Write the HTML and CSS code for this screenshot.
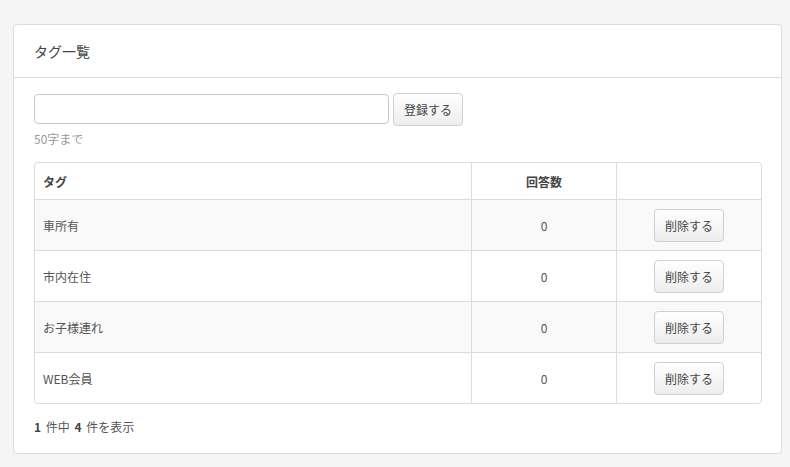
FILE: index.html
```html
<!DOCTYPE html>
<html lang="ja">
<head>
<meta charset="utf-8">
<title>タグ一覧</title>
<link rel="stylesheet" href="styles.css">
</head>
<body>
<div class="panel">
  <div class="panel-heading">タグ一覧</div>
  <div class="panel-body">
    <form class="tag-form">
      <input class="tag-input" type="text">
      <button class="btn btn-submit" type="button">登録する</button>
    </form>
    <p class="help">50字まで</p>
    <table class="tag-table">
      <thead>
        <tr><th class="col-tag">タグ</th><th class="col-count">回答数</th><th class="col-action"></th></tr>
      </thead>
      <tbody>
        <tr><td>車所有</td><td class="num">0</td><td class="act"><button class="btn" type="button">削除する</button></td></tr>
        <tr><td>市内在住</td><td class="num">0</td><td class="act"><button class="btn" type="button">削除する</button></td></tr>
        <tr><td>お子様連れ</td><td class="num">0</td><td class="act"><button class="btn" type="button">削除する</button></td></tr>
        <tr><td>WEB会員</td><td class="num">0</td><td class="act"><button class="btn" type="button">削除する</button></td></tr>
      </tbody>
    </table>
    <p class="summary"><b>1</b> 件中 <b>4</b> 件を表示</p>
  </div>
</div>
</body>
</html>
```
FILE: styles.css
```css
html, body {
  margin: 0;
  background: #f5f5f5;
}
body {
  padding: 24px 8px 0 13px;
  font-family: "Noto Sans CJK JP", "Noto Sans", sans-serif;
  font-size: 12px;
  color: #555;
}
.panel {
  background: #fff;
  border: 1px solid #dcdcdc;
  border-radius: 4px;
  height: 430px;
  box-sizing: border-box;
}
.panel-heading {
  height: 53px;
  box-sizing: border-box;
  padding: 0 20px;
  display: flex;
  align-items: center;
  font-size: 14px;
  color: #444;
  border-bottom: 1px solid #dcdcdc;
}
.panel-body {
  padding: 15px 20px 0 20px;
}
.tag-form {
  display: flex;
  align-items: flex-start;
  gap: 4px;
  margin: 0;
}
.tag-input {
  width: 355px;
  height: 30px;
  box-sizing: border-box;
  border: 1px solid #c8c8c8;
  border-radius: 4px;
  margin: 1px 0 0 0;
  padding: 4px 8px;
  font: inherit;
}
.btn {
  height: 33px;
  width: 70px;
  box-sizing: border-box;
  border: 1px solid #d0d0d0;
  border-radius: 4px;
  background: linear-gradient(#ffffff, #ededed);
  color: #444;
  font-family: inherit;
  font-size: 12px;
  padding: 0;
  cursor: pointer;
}
.help {
  margin: 4px 0 0 0;
  color: #999;
  font-size: 12px;
  line-height: 18px;
}
.tag-table {
  margin-top: 14px;
  width: 728px;
  border-collapse: separate;
  border-spacing: 0;
  border: 1px solid #dcdcdc;
  border-radius: 4px;
  overflow: hidden;
}
.tag-table th, .tag-table td {
  padding: 0 8px;
  text-align: left;
  border-left: 1px solid #dcdcdc;
  border-top: 1px solid #dcdcdc;
}
.tag-table th:first-child, .tag-table td:first-child {
  border-left: none;
}
.tag-table thead th {
  border-top: none;
  height: 36px;
  font-weight: bold;
  color: #444;
}
.tag-table td {
  height: 50px;
}
.tag-table tbody tr:nth-child(odd) td {
  background: #f9f9f9;
}
.col-tag { width: 420px; }
.col-count { width: 128px; }
.tag-table th.col-count, .tag-table td.num {
  text-align: center;
}
.tag-table td.act {
  text-align: center;
}
.summary {
  margin: 14px 0 0 0;
  color: #555;
  word-spacing: 2px;
}
.summary b {
  color: #444;
}
```
